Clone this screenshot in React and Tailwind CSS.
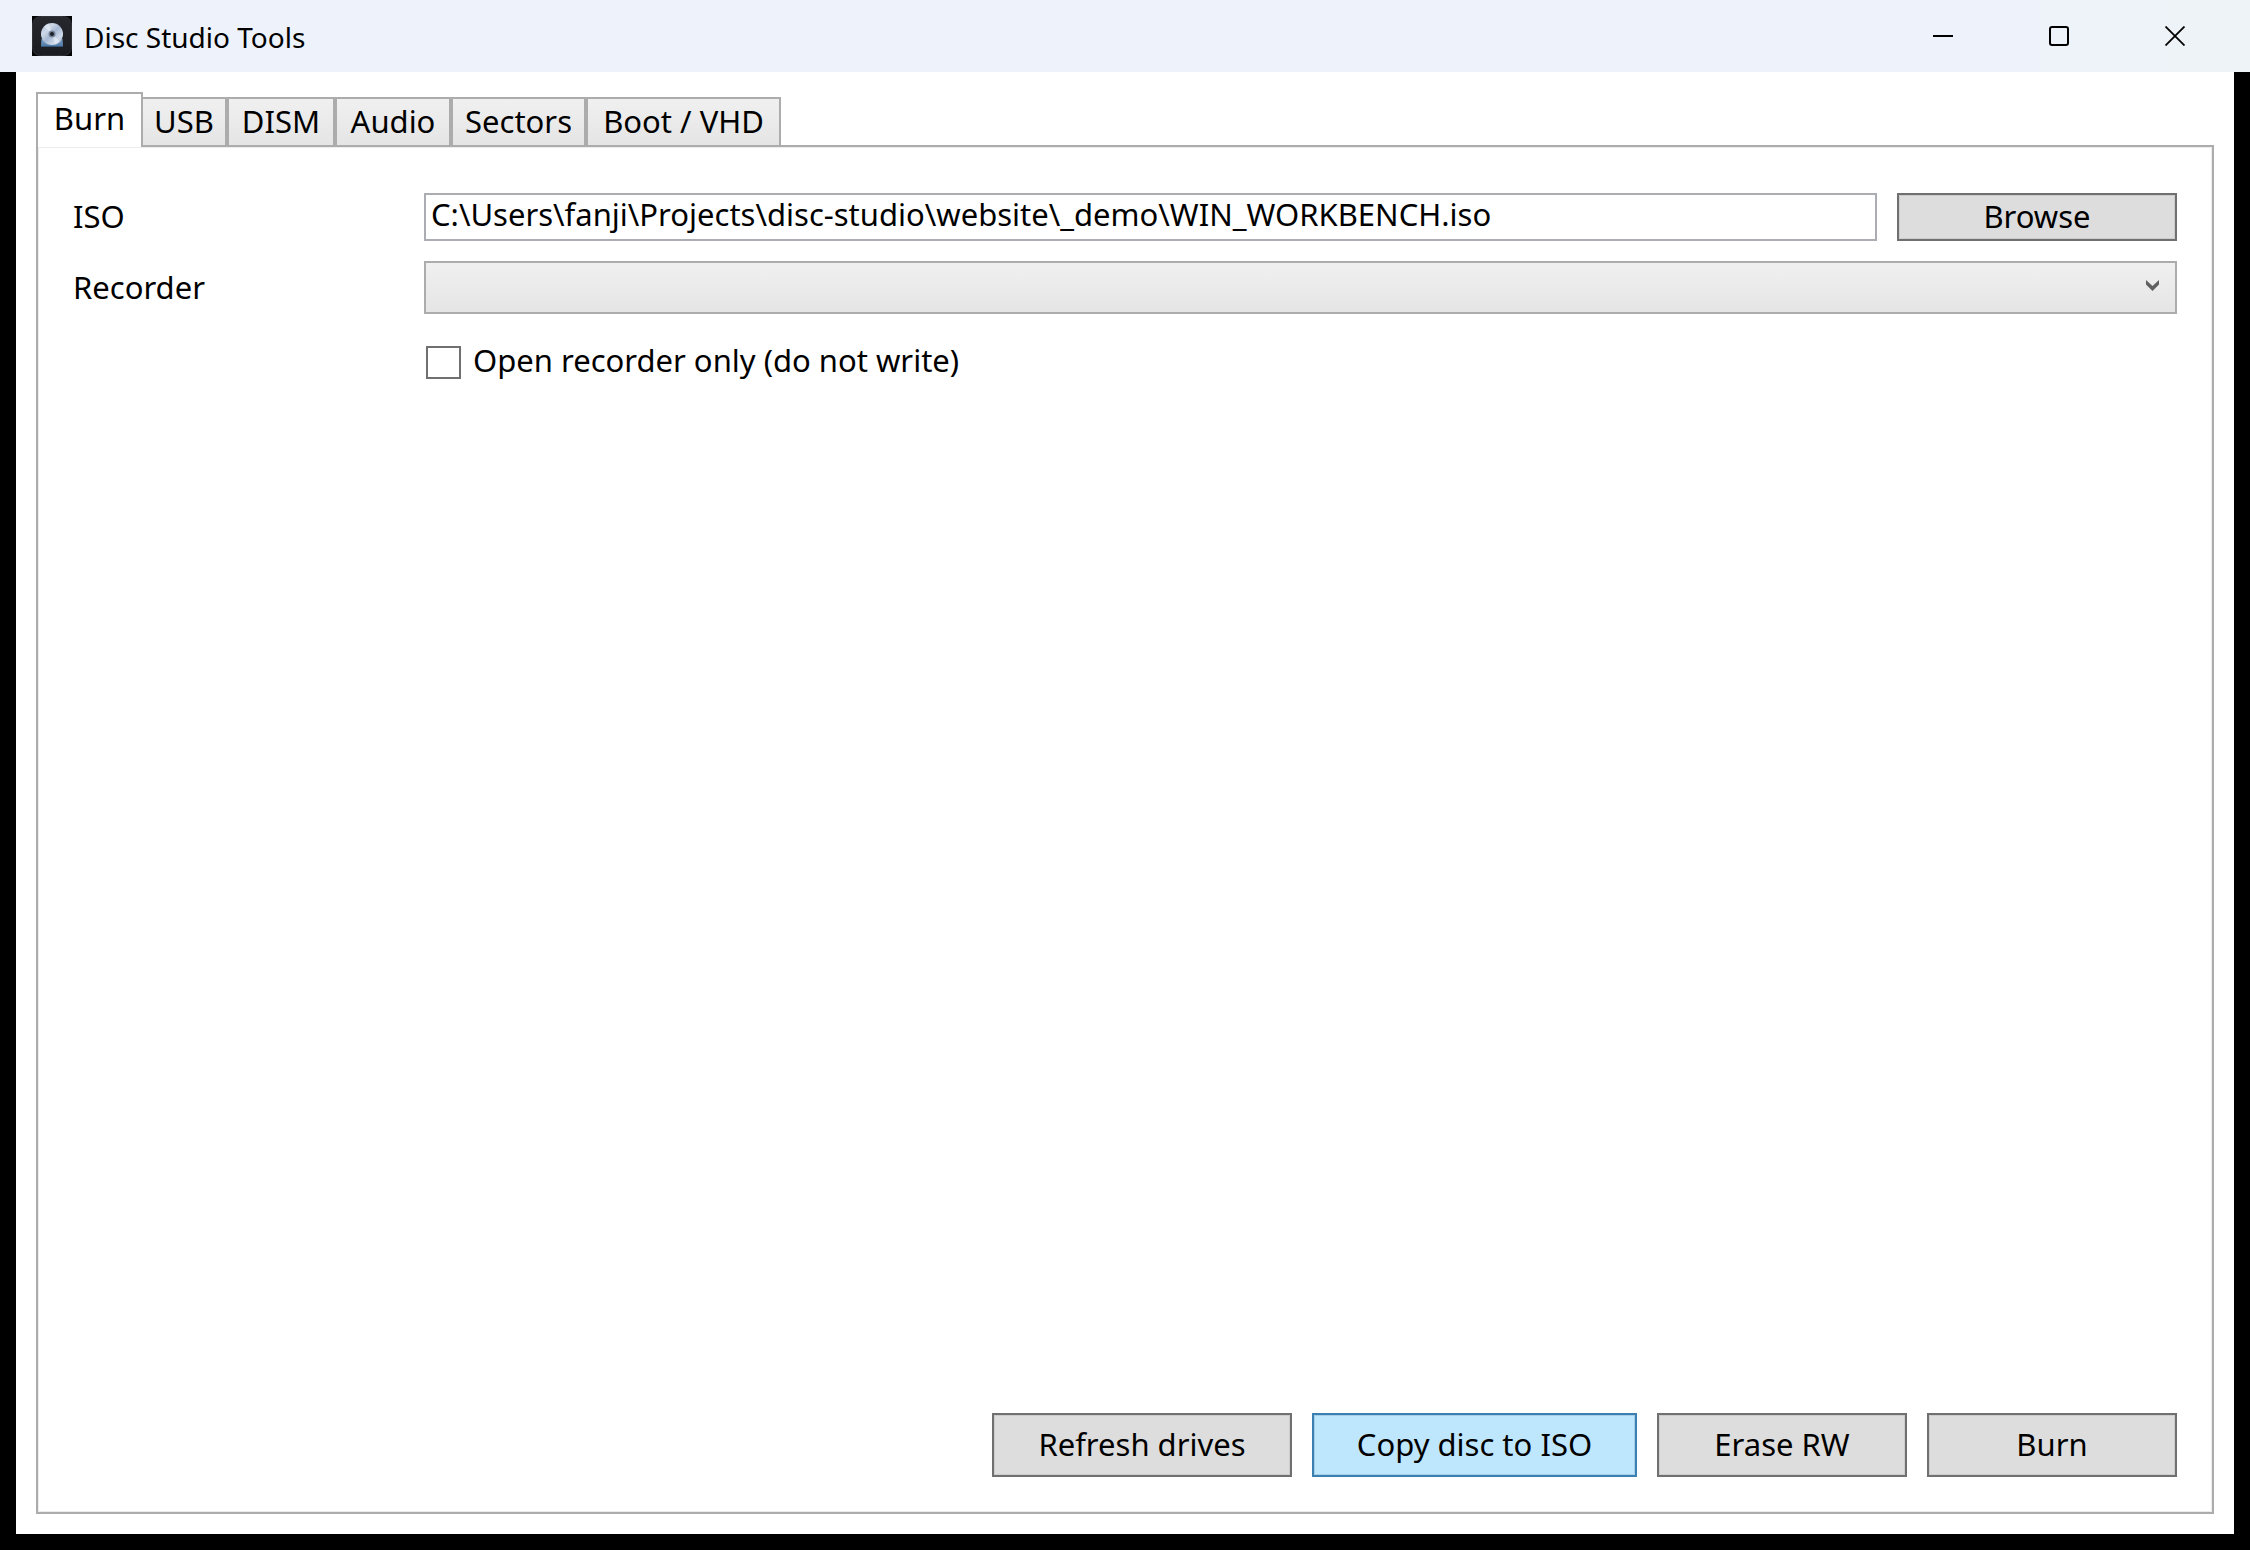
import React, { useState } from 'react';

const tabs = [
  { name: 'Burn', width: 'w-[107px]' },
  { name: 'USB', width: 'w-[84px]' },
  { name: 'DISM', width: 'w-[108px]' },
  { name: 'Audio', width: 'w-[116px]' },
  { name: 'Sectors', width: 'w-[135px]' },
  { name: 'Boot / VHD', width: 'w-[195px]' },
];

const actions = [
  { name: 'Refresh drives', width: 'w-[300px]' },
  { name: 'Copy disc to ISO', width: 'w-[325px]', hot: true },
  { name: 'Erase RW', width: 'w-[250px]' },
  { name: 'Burn', width: 'w-[250px]' },
];

const DiscIcon = () => (
  <svg className="w-10 h-10" viewBox="0 0 40 40" aria-hidden="true">
    <defs>
      <linearGradient id="tile" x1="0" y1="0" x2="0" y2="1">
        <stop offset="0" stopColor="#26282e" />
        <stop offset="1" stopColor="#1a1c21" />
      </linearGradient>
      <linearGradient id="disc" x1="0" y1="0" x2="1" y2="1">
        <stop offset="0" stopColor="#a9bbd4" />
        <stop offset="0.3" stopColor="#cdd8e8" />
        <stop offset="0.5" stopColor="#a6b8d2" />
        <stop offset="0.75" stopColor="#cfdaea" />
        <stop offset="1" stopColor="#9aaeca" />
      </linearGradient>
      <linearGradient id="base" x1="0" y1="0" x2="0" y2="1">
        <stop offset="0" stopColor="#7fa3cc" />
        <stop offset="1" stopColor="#4d759f" />
      </linearGradient>
    </defs>
    <rect width="40" height="40" fill="#050506" />
    <rect x="0.5" y="0.5" width="39" height="39" rx="8" fill="url(#tile)" stroke="#2f3238" />
    <path d="M9.5 23h21l0.5 6.500q0 1.500-1.500 1.500h-19q-1.500 0-1.500-1.500z" fill="url(#base)" />
    <path d="M9.500 30.500h21" stroke="#34557a" strokeWidth="1" />
    <circle cx="20" cy="18" r="11" fill="url(#disc)" />
    <path d="M20 18L12 10.500A11 11 0 0 1 17 7.500zM20 18L28 25.500A11 11 0 0 1 23 28.500z" fill="#f2f6fb" opacity="0.5" />
    <circle cx="20" cy="18" r="3.500" fill="#74839a" />
    <circle cx="20" cy="18" r="2" fill="#1b1e24" />
  </svg>
);

const TitleBar = () => (
  <header className="flex items-center h-[72px] pl-8 pr-[17px] bg-linear-to-r from-[#eef3fb] from-90% to-[#eef3f7]">
    <DiscIcon />
    <h1 className="flex-1 pt-0.5 pl-3 text-[28px] leading-10">Disc Studio Tools</h1>
    <button aria-label="Minimize" className="flex items-center justify-center w-[116px] h-full">
      <svg className="w-5 h-5" viewBox="0 0 20 20">
        <path d="M0 10h20" stroke="black" strokeWidth="2" />
      </svg>
    </button>
    <button aria-label="Maximize" className="flex items-center justify-center w-[116px] h-full">
      <svg className="w-5 h-5" viewBox="0 0 20 20">
        <rect x="1" y="1" width="18" height="18" rx="2" fill="none" stroke="black" strokeWidth="2" />
      </svg>
    </button>
    <button aria-label="Close" className="flex items-center justify-center w-[116px] h-full">
      <svg className="w-5 h-5" viewBox="0 0 20 20">
        <path d="M0.500 0.500l19 19M19.500 0.500l-19 19" stroke="black" strokeWidth="1.800" />
      </svg>
    </button>
  </header>
);

const App = () => {
  const [activeTab, setActiveTab] = useState('Burn');
  const [iso, setIso] = useState('C:\\Users\\fanji\\Projects\\disc-studio\\website\\_demo\\WIN_WORKBENCH.iso');
  const [openOnly, setOpenOnly] = useState(false);

  return (
    <div className="flex flex-col min-h-screen bg-black text-black font-['Noto_Sans',sans-serif] text-[31px] leading-10">
      <TitleBar />

      <main className="flex flex-col flex-1 mx-4 mb-4 p-5 bg-white">
        <div role="tablist" className="relative flex items-end -mb-0.5">
          {tabs.map(tab => (
            <button
              key={tab.name}
              role="tab"
              aria-selected={activeTab === tab.name}
              onClick={() => setActiveTab(tab.name)}
              className={`${tab.width} whitespace-nowrap border-[#acacac] ${
                activeTab === tab.name
                  ? 'h-[55px] pb-1.5 bg-white border-x-2 border-t-2'
                  : 'h-[50px] pb-0.5 bg-linear-to-b from-[#f0f0f0] to-[#e5e5e5] border-2 nth-2:border-l-0'
              }`}
            >
              {tab.name}
            </button>
          ))}
        </div>

        <section className="flex flex-col flex-1 px-[35px] pt-[46px] pb-[35px] border-2 border-[#acacac] shadow-[inset_0_0_0_1px_#ececec]">
          <div className="grid grid-cols-[351px_1fr_280px] gap-y-5 items-center">
            <label htmlFor="iso" className="pb-0.5">ISO</label>
            <input
              id="iso"
              type="text"
              value={iso}
              onChange={e => setIso(e.target.value)}
              className="h-12 mr-5 px-[5px] pb-1.5 bg-white border-2 border-[#abadb3] outline-none"
            />
            <button className="h-12 pb-0.5 bg-[#dddddd] border-2 border-[#707070] shadow-[inset_0_0_0_1px_#cccccc]">
              Browse
            </button>

            <label htmlFor="recorder" className="pb-0.5">Recorder</label>
            <div className="relative col-span-2">
              <select
                id="recorder"
                className="block w-full h-[53px] px-2 appearance-none bg-linear-to-b from-[#f0f0f0] to-[#e5e5e5] border-2 border-[#acacac] outline-none"
              />
              <svg className="absolute right-[18px] top-[19px] w-[13px] h-3 pointer-events-none" viewBox="0 0 13 12">
                <path d="M0 0l6.500 6L13 0v4.500L6.500 11 0 4.500z" fill="#606060" />
              </svg>
            </div>
          </div>

          <div className="flex items-center mt-[26px] ml-[353px]">
            <input
              id="open-only"
              type="checkbox"
              checked={openOnly}
              onChange={e => setOpenOnly(e.target.checked)}
              className="w-[35px] h-[33px] mt-1 appearance-none bg-white border-2 border-[#707070] checked:bg-[#707070]"
            />
            <label htmlFor="open-only" className="pl-3">Open recorder only (do not write)</label>
          </div>

          <div className="flex justify-end gap-5 mt-auto">
            {actions.map(action => (
              <button
                key={action.name}
                className={`${action.width} h-16 pb-0.5 border-2 ${
                  action.hot
                    ? 'bg-[#bee6fd] border-[#3c7fb1] shadow-[inset_0_0_0_1px_#a5cfe9]'
                    : 'bg-[#dddddd] border-[#707070] shadow-[inset_0_0_0_1px_#cccccc]'
                }`}
              >
                {action.name}
              </button>
            ))}
          </div>
        </section>
      </main>
    </div>
  );
};

export default App;
